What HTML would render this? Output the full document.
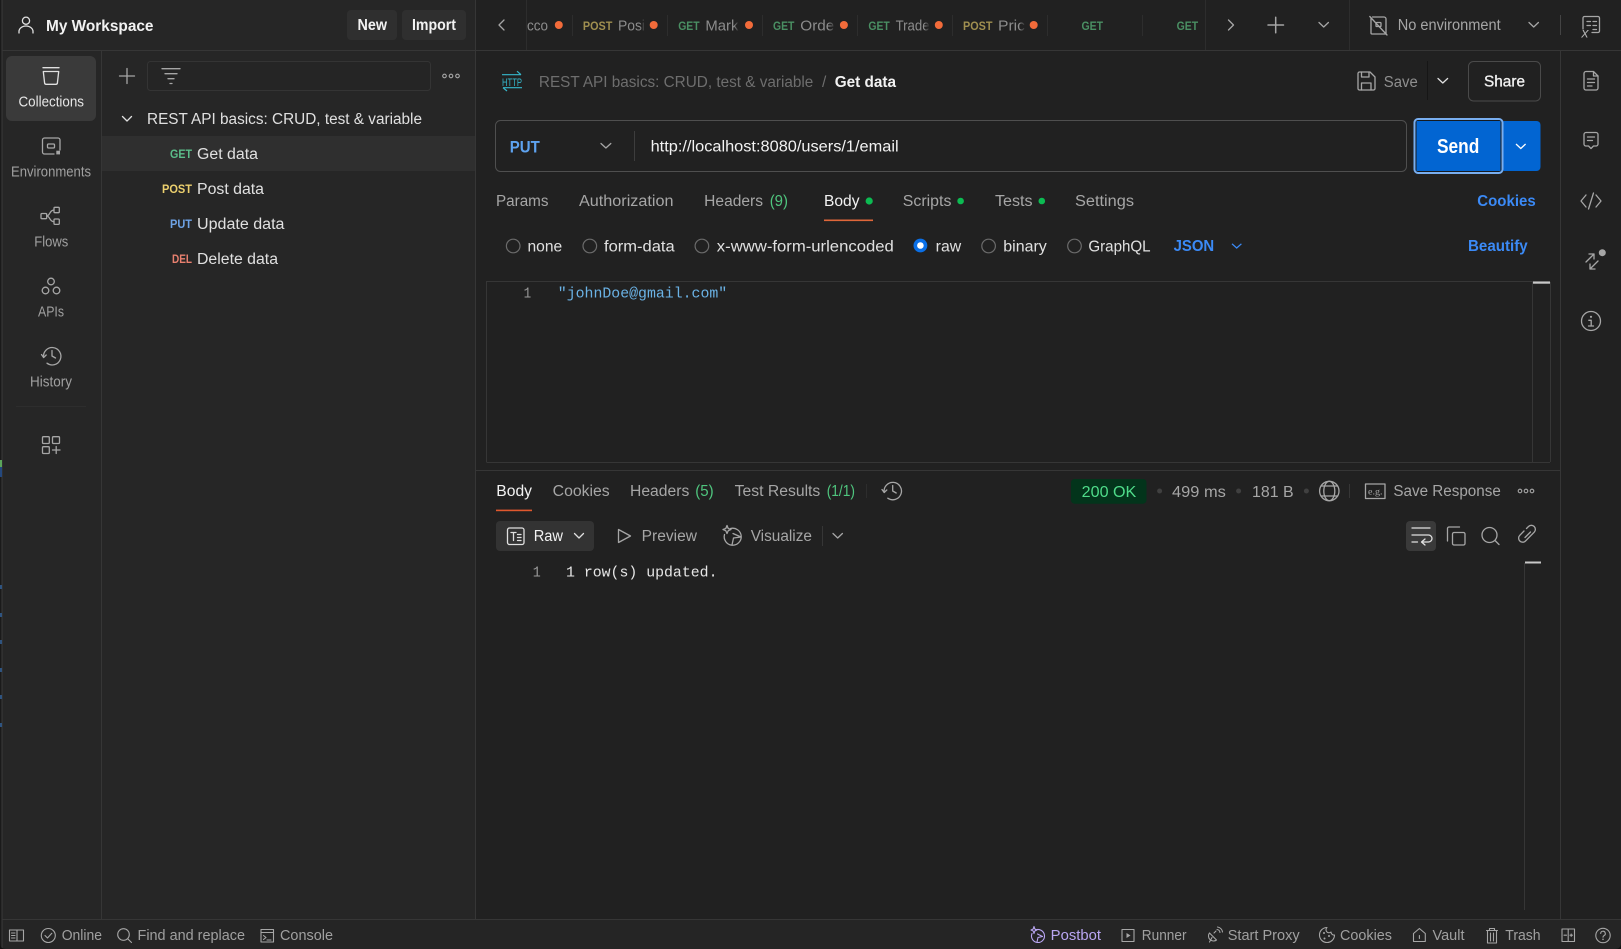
<!DOCTYPE html>
<html><head><meta charset="utf-8"><title>Postman</title>
<style>
html,body{margin:0;padding:0;background:#212121;width:1621px;height:949px;overflow:hidden}
svg{display:block}
text{font-family:"Liberation Sans",sans-serif;font-size:15.5px;fill:#a6a6a6}
.w{fill:#f2f2f2}.l{fill:#e0e0e0}.b{font-weight:bold}
.s{font-size:14.5px;fill:#a0a0a0}
.m{font-size:11.5px;font-weight:bold}
.mono{font-family:"Liberation Mono",monospace;font-size:14.7px}
.ti{font-size:15px;fill:#8c8c8c}
.g{fill:#5bbd8a}.y{fill:#ecd06e}.bl{fill:#6ea3e6}.r{fill:#e8806f}
.tg{fill:#4a8f63}.ty{fill:#a08f50}
.lk{fill:#3b8af6;font-weight:bold}
.i{fill:none;stroke:#a6a6a6;stroke-width:1.3;stroke-linecap:round;stroke-linejoin:round}
.d{fill:none;stroke:#e0e0e0;stroke-width:1.3;stroke-linecap:round;stroke-linejoin:round}
.ln{stroke:#363636;stroke-width:1;fill:none}
.ln2{stroke:#2d2d2d;stroke-width:1;fill:none}
.dot{fill:#f26b3a}
.gd{fill:#0cbb52}
</style></head><body>
<svg width="1621" height="949" viewBox="0 0 1621 949" xmlns="http://www.w3.org/2000/svg">
<defs><linearGradient id="fd"><stop offset="0" stop-color="#212121" stop-opacity="0"/><stop offset="1" stop-color="#212121"/></linearGradient></defs>
<rect width="1621" height="949" fill="#212121"/>
<rect x="0" y="0" width="476" height="949" fill="#262626"/>
<rect x="0" y="919" width="1621" height="30" fill="#252525"/>
<rect x="0" y="0" width="1.5" height="949" fill="#1a1a1a"/>
<rect x="1.5" y="0" width="1" height="949" fill="#3a3a3a"/>
<rect x="0" y="460" width="2" height="7" fill="#5aa55a"/><rect x="0" y="467" width="2" height="10" fill="#24487e"/>
<rect x="0" y="585" width="2" height="4" fill="#2f5480"/><rect x="0" y="613" width="2" height="4" fill="#2f5480"/><rect x="0" y="640" width="2" height="4" fill="#2f5480"/><rect x="0" y="668" width="2" height="4" fill="#2f5480"/><rect x="0" y="695" width="2" height="4" fill="#2f5480"/><rect x="0" y="723" width="2" height="4" fill="#2f5480"/>

<!-- structural lines -->
<path class="ln" d="M2 50.5H1621M101.5 50.5V919M475.5 0V919M1560.5 50V919M2 919.5H1621M476 470.5H1560"/>
<path class="ln2" d="M526.5 0V50M1205.5 0V50M1349.5 0V50"/>
<path class="ln2" d="M572.5 15V36M667.5 15V36M762.5 15V36M857.5 15V36M952.5 15V36M1047.5 15V36M1142.5 15V36"/>
<path class="ln" d="M1560.5 15V35" style="stroke:#444"/>

<!-- workspace header -->
<g class="d"><circle cx="26" cy="20.7" r="3.6"/><path d="M19 33v-1.5a7 5.5 0 0 1 14 0V33"/></g>
<text x="46" y="31" class="w b" textLength="107.5" lengthAdjust="spacingAndGlyphs">My Workspace</text>
<rect x="347" y="10" width="50" height="30" rx="4" fill="#2f2f2f"/>
<rect x="402" y="10" width="64" height="30" rx="4" fill="#2f2f2f"/>
<text x="357.5" y="30" class="w b" textLength="29.5" lengthAdjust="spacingAndGlyphs">New</text>
<text x="412" y="30" class="w b" textLength="44" lengthAdjust="spacingAndGlyphs">Import</text>

<!-- left nav -->
<rect x="6" y="56" width="90" height="65" rx="6" fill="#3a3a3a"/>
<g class="d"><path d="M43 67.7H59"/><path d="M43.3 71.5H58.7L57.4 83a1.5 1.5 0 0 1-1.5 1.3H46.1A1.5 1.5 0 0 1 44.6 83Z"/></g>
<text x="18.5" y="106.5" class="s" style="fill:#e6e6e6" textLength="65.5" lengthAdjust="spacingAndGlyphs">Collections</text>
<g class="i"><path d="M60 150V140a2 2 0 0 0-2-2H44.5a2 2 0 0 0-2 2v12a2 2 0 0 0 2 2H54"/><rect x="47.5" y="144" width="7" height="4" rx="1"/></g>
<rect x="56.3" y="150.7" width="3.7" height="3.7" fill="#a6a6a6"/>
<text x="11" y="176.5" class="s" textLength="80" lengthAdjust="spacingAndGlyphs">Environments</text>
<g class="i"><rect x="41" y="213.5" width="5.7" height="5.2" rx="1"/><rect x="54" y="207.3" width="5.3" height="5.4" rx="1"/><rect x="54" y="219" width="5.3" height="5.4" rx="1"/><path d="M46.7 216C50 216 49.5 210 54 210M46.7 216C50 216 49.5 221.7 54 221.7"/></g>
<text x="34.3" y="246.5" class="s" textLength="34" lengthAdjust="spacingAndGlyphs">Flows</text>
<g class="i"><circle cx="51" cy="281.5" r="3.3"/><circle cx="45.5" cy="290.5" r="3.3"/><circle cx="56.5" cy="290.5" r="3.3"/></g>
<text x="38" y="316.5" class="s" textLength="26" lengthAdjust="spacingAndGlyphs">APIs</text>
<g class="i"><path d="M43.6 357.5A8.7 8.7 0 1 1 47 363.2"/><path d="M41.5 354.5L43.6 357.5L46.2 355"/><path d="M52 350.5V356L55.5 358"/></g>
<text x="30" y="386.5" class="s" textLength="42" lengthAdjust="spacingAndGlyphs">History</text>
<path class="ln2" d="M16 406.5H86"/>
<g class="i"><rect x="42.5" y="436.7" width="6.8" height="6.8" rx="1"/><rect x="52.5" y="436.7" width="7" height="6.8" rx="1"/><rect x="42.5" y="446.7" width="6.8" height="6.8" rx="1"/><path d="M52.5 450H60M56.2 446.5V453.5"/></g>

<!-- collection toolbar -->
<path class="i" d="M119.5 76H134.5M127 68.5V83.5" stroke-width="1.5"/>
<rect x="147.5" y="61.5" width="283" height="29" rx="3" fill="#252525" stroke="#343434"/>
<path class="i" d="M162 68.7H180M165 73.7H177M168 78.7H174M170 83.5H172"/>
<g class="i" style="stroke-width:1.1"><circle cx="444.5" cy="76" r="1.8"/><circle cx="451" cy="76" r="1.8"/><circle cx="457.5" cy="76" r="1.8"/></g>

<path class="d" d="M122.5 116.5L127 121L131.5 116.5"/>
<text x="147" y="124" class="l" textLength="275" lengthAdjust="spacingAndGlyphs">REST API basics: CRUD, test &amp; variable</text>
<rect x="102" y="136" width="373" height="35" fill="#2f2f2f"/>
<text x="170" y="158" class="m g" textLength="22" lengthAdjust="spacingAndGlyphs">GET</text>
<text x="197" y="159" class="l" textLength="61" lengthAdjust="spacingAndGlyphs">Get data</text>
<text x="162" y="193" class="m y" textLength="30" lengthAdjust="spacingAndGlyphs">POST</text>
<text x="197" y="194" class="l" textLength="67" lengthAdjust="spacingAndGlyphs">Post data</text>
<text x="170" y="228" class="m bl" textLength="22" lengthAdjust="spacingAndGlyphs">PUT</text>
<text x="197" y="229" class="l" textLength="87.5" lengthAdjust="spacingAndGlyphs">Update data</text>
<text x="172" y="263" class="m r" textLength="20" lengthAdjust="spacingAndGlyphs">DEL</text>
<text x="197" y="264" class="l" textLength="81" lengthAdjust="spacingAndGlyphs">Delete data</text>

<!-- tabs -->
<path class="i" d="M504 20L499 25L504 30"/>
<text x="527" y="30.5" class="ti" textLength="21" lengthAdjust="spacingAndGlyphs">cco</text><circle class="dot" cx="558.8" cy="25" r="4"/>
<text x="582.9" y="30" class="m ty" textLength="29.5" lengthAdjust="spacingAndGlyphs">POST</text><text x="618" y="30.5" class="ti" textLength="27" lengthAdjust="spacingAndGlyphs">Posi</text><circle class="dot" cx="653.7" cy="25" r="4"/>
<text x="678.2" y="30" class="m tg" textLength="21.4" lengthAdjust="spacingAndGlyphs">GET</text><text x="705.4" y="30.5" class="ti" textLength="33" lengthAdjust="spacingAndGlyphs">Mark</text><circle class="dot" cx="749" cy="25" r="4"/>
<text x="773" y="30" class="m tg" textLength="21.4" lengthAdjust="spacingAndGlyphs">GET</text><text x="800.3" y="30.5" class="ti" textLength="34" lengthAdjust="spacingAndGlyphs">Orde</text><circle class="dot" cx="843.9" cy="25" r="4"/>
<text x="868.4" y="30" class="m tg" textLength="21.4" lengthAdjust="spacingAndGlyphs">GET</text><text x="895.6" y="30.5" class="ti" textLength="34" lengthAdjust="spacingAndGlyphs">Trade</text><circle class="dot" cx="938.8" cy="25" r="4"/>
<text x="963" y="30" class="m ty" textLength="29.5" lengthAdjust="spacingAndGlyphs">POST</text><text x="998" y="30.5" class="ti" textLength="27" lengthAdjust="spacingAndGlyphs">Pric</text><circle class="dot" cx="1033.7" cy="25" r="4"/>
<g fill="url(#fd)"><rect x="640" y="15" width="5" height="20"/><rect x="734" y="15" width="5" height="20"/><rect x="829.5" y="15" width="5" height="20"/><rect x="924.5" y="15" width="5" height="20"/><rect x="1020" y="15" width="5" height="20"/></g>
<text x="1081.5" y="30" class="m tg" textLength="21.5" lengthAdjust="spacingAndGlyphs">GET</text>
<text x="1176.6" y="30" class="m tg" textLength="21.5" lengthAdjust="spacingAndGlyphs">GET</text>
<path class="i" d="M1228.5 20L1233.5 25L1228.5 30"/>
<path class="i" d="M1268 25H1283.5M1275.7 17.2V32.8" style="stroke-width:1.5"/>
<path class="i" d="M1319 22.5L1323.7 27L1328.4 22.5"/>
<g class="i"><path d="M1371 18.5V33a1 1 0 0 0 1 1H1386V19a2 2 0 0 0-2-2H1372.5"/><path d="M1369.8 16.5L1387 35" /><rect x="1376" y="22.5" width="5" height="4" rx=".8"/></g>
<text x="1397.7" y="30" fill="#a0a0a0" textLength="103" lengthAdjust="spacingAndGlyphs">No environment</text>
<path class="i" d="M1529 22.5L1533.7 27L1538.4 22.5"/>
<g class="i"><path d="M1583 29V18a1.5 1.5 0 0 1 1.5-1.5H1598a1.5 1.5 0 0 1 1.5 1.5V31a1.5 1.5 0 0 1-1.5 1.5H1592"/><path d="M1587 21.5H1590.5M1593 21.5H1596.5M1587 25.5H1590.5M1593 25.5H1596.5M1593 29.5H1596.5"/></g>
<text x="1581.5" y="37.5" style="font-size:14px;font-style:italic;fill:#b0b0b0">x</text>

<!-- breadcrumb -->
<g fill="none" stroke="#35b8cc" stroke-width="1.2"><path d="M502 74.7H521M517 71.2L521 74.7M503 87.7H522M503 87.7L507 91"/></g>
<text x="502" y="85.8" style="font-size:11px;fill:#35b8cc" textLength="20" lengthAdjust="spacingAndGlyphs">HTTP</text>
<text x="538.9" y="87" style="fill:#6e6e6e" textLength="274.4" lengthAdjust="spacingAndGlyphs">REST API basics: CRUD, test &amp; variable</text>
<text x="822" y="87" style="fill:#6e6e6e">/</text>
<text x="834.7" y="87" class="w b" textLength="61.3" lengthAdjust="spacingAndGlyphs">Get data</text>
<g class="i"><path d="M1358 73.5a1.5 1.5 0 0 1 1.5-1.5H1370L1375 77V88.5a1.5 1.5 0 0 1-1.5 1.5H1359.5a1.5 1.5 0 0 1-1.5-1.5Z"/><path d="M1361.5 72V77H1369V72M1361.5 90V83H1371V90"/></g>
<text x="1383.8" y="87" style="fill:#8f8f8f" textLength="34" lengthAdjust="spacingAndGlyphs">Save</text>
<path d="M1427.5 61V100" stroke="#161616"/>
<path class="d" d="M1438 78.5L1442.8 83L1447.6 78.5"/>
<rect x="1468.5" y="61.5" width="72" height="39.5" rx="5" fill="none" stroke="#4a4a4a"/>
<text x="1484" y="86.5" class="w" style="font-size:15.5px;stroke:#f2f2f2;stroke-width:.3" textLength="41" lengthAdjust="spacingAndGlyphs">Share</text>
<g class="i"><path d="M1584 73.5a2 2 0 0 1 2-2H1593.5L1598 76V88a2 2 0 0 1-2 2H1586a2 2 0 0 1-2-2Z"/><path d="M1587.5 79H1594.5M1587.5 82.5H1594.5M1587.5 86H1592M1593.5 72V76H1598"/></g>

<!-- URL bar -->
<rect x="495.5" y="120.5" width="911" height="51" rx="5" fill="#212121" stroke="#4f4f4f"/>
<text x="509.8" y="152.5" style="font-size:17px;fill:#5ea3f0;font-weight:bold" textLength="30" lengthAdjust="spacingAndGlyphs">PUT</text>
<path class="i" d="M601 143.5L605.9 148L610.8 143.5"/>
<path class="ln" d="M634.5 131V161" style="stroke:#3d3d3d"/>
<text x="650.6" y="151.5" class="w" textLength="248" lengthAdjust="spacingAndGlyphs">http://localhost:8080/users/1/email</text>
<path d="M1503.5 121H1536.5a4 4 0 0 1 4 4V167a4 4 0 0 1-4 4H1503.5Z" fill="#0265d2"/>
<rect x="1414.5" y="119" width="88" height="54" rx="3.5" fill="#161a1f" stroke="#78aef0" stroke-width="2"/>
<rect x="1416.5" y="121" width="84" height="50" fill="#0265d2"/>
<text x="1437" y="153" style="font-size:20px;font-weight:bold;fill:#fff" textLength="42.3" lengthAdjust="spacingAndGlyphs">Send</text>
<path d="M1516 144L1520.8 148.5L1525.6 144" fill="none" stroke="#fff" stroke-width="1.3"/>

<!-- right sidebar icons -->
<g class="i" transform="translate(0,-1)"><path d="M1584 135.5a2 2 0 0 1 2-2H1596a2 2 0 0 1 2 2V145a2 2 0 0 1-2 2H1593.5L1591 149.5L1588.5 147H1586a2 2 0 0 1-2-2Z"/><path d="M1587.5 138H1594.5M1587.5 141.5H1592.5"/></g>
<path class="i" d="M1586 195L1581 201L1586 207M1596 195L1601 201L1596 207M1593.5 193L1588.5 209"/>
<g class="i"><path d="M1586 262L1594 254M1589 254H1594V259M1598 261L1590 269M1590 264V269H1595"/></g>
<circle cx="1602.3" cy="252.7" r="3.5" fill="#a6a6a6"/>
<circle class="i" cx="1591" cy="321" r="9.5"/>
<circle cx="1591" cy="316.8" r="1.1" fill="#a6a6a6"/>
<path class="i" d="M1588.8 320.3H1591.2V326M1588.5 326H1593.5"/>

<!-- request tabs -->
<text x="496" y="206" textLength="52.5" lengthAdjust="spacingAndGlyphs">Params</text>
<text x="579" y="206" textLength="94.5" lengthAdjust="spacingAndGlyphs">Authorization</text>
<text x="704.2" y="206" textLength="58.8" lengthAdjust="spacingAndGlyphs">Headers</text>
<text x="769.7" y="206" style="fill:#4fc57e" textLength="18.3" lengthAdjust="spacingAndGlyphs">(9)</text>
<text x="824" y="206" class="w" textLength="35.5" lengthAdjust="spacingAndGlyphs">Body</text>
<circle class="gd" cx="869.2" cy="201" r="3.6"/>
<rect x="824" y="219.5" width="49" height="1.6" fill="#e0673a"/>
<text x="902.8" y="206" textLength="48.6" lengthAdjust="spacingAndGlyphs">Scripts</text>
<circle class="gd" cx="960.6" cy="201" r="3.3"/>
<text x="995" y="206" textLength="37.6" lengthAdjust="spacingAndGlyphs">Tests</text>
<circle class="gd" cx="1041.8" cy="201" r="3.3"/>
<text x="1075" y="206" textLength="59" lengthAdjust="spacingAndGlyphs">Settings</text>
<text x="1477.3" y="206" class="lk" textLength="58.4" lengthAdjust="spacingAndGlyphs">Cookies</text>

<!-- body type radios -->
<g fill="none" stroke="#6b6b6b" stroke-width="1.2"><circle cx="513.2" cy="246" r="6.8"/><circle cx="589.8" cy="246" r="6.8"/><circle cx="701.9" cy="246" r="6.8"/><circle cx="988.6" cy="246" r="6.8"/><circle cx="1074.5" cy="246" r="6.8"/></g>
<circle cx="920.4" cy="245.5" r="6.9" fill="#0a6fe6"/><circle cx="920.4" cy="245.5" r="3.3" fill="#fff"/>
<text x="527.5" y="251.7" class="l" textLength="34.7" lengthAdjust="spacingAndGlyphs">none</text>
<text x="604" y="251.7" class="l" textLength="70.7" lengthAdjust="spacingAndGlyphs">form-data</text>
<text x="716.8" y="251.7" class="l" textLength="177" lengthAdjust="spacingAndGlyphs">x-www-form-urlencoded</text>
<text x="935.7" y="251.7" class="l" textLength="25.5" lengthAdjust="spacingAndGlyphs">raw</text>
<text x="1003.3" y="251.7" class="l" textLength="43.5" lengthAdjust="spacingAndGlyphs">binary</text>
<text x="1088.4" y="251.7" class="l" textLength="62.2" lengthAdjust="spacingAndGlyphs">GraphQL</text>
<text x="1173.6" y="251" class="lk" textLength="40.6" lengthAdjust="spacingAndGlyphs">JSON</text>
<path d="M1232 243.8L1236.7 248L1241.4 243.8" fill="none" stroke="#3b8af6" stroke-width="1.3"/>
<text x="1468" y="251" class="lk" textLength="59.7" lengthAdjust="spacingAndGlyphs">Beautify</text>

<!-- editor -->
<path class="ln" d="M486.5 462V281.5H1550M486.5 462.5H1550M1532.5 282V462M1550.5 282V462"/>
<rect x="1533" y="281.5" width="17" height="2.2" fill="#c8c8c8"/>
<text x="523.6" y="297.5" class="mono" style="fill:#9a9a9a" textLength="7.6" lengthAdjust="spacingAndGlyphs">1</text>
<text x="557.8" y="297.5" class="mono" style="fill:#6bb3e6" textLength="169.4" lengthAdjust="spacingAndGlyphs">"johnDoe@gmail.com"</text>

<!-- response tabs -->
<text x="496.3" y="496" class="w" textLength="35.7" lengthAdjust="spacingAndGlyphs">Body</text>
<rect x="496" y="509.6" width="36" height="1.6" fill="#e0582e"/>
<text x="552.7" y="496" textLength="57" lengthAdjust="spacingAndGlyphs">Cookies</text>
<text x="630" y="496" textLength="59.3" lengthAdjust="spacingAndGlyphs">Headers</text>
<text x="695.3" y="496" style="fill:#4fc57e" textLength="18.4" lengthAdjust="spacingAndGlyphs">(5)</text>
<text x="734.7" y="496" textLength="85.6" lengthAdjust="spacingAndGlyphs">Test Results</text>
<text x="826.7" y="496" style="fill:#4fc57e" textLength="28.3" lengthAdjust="spacingAndGlyphs">(1/1)</text>
<path class="ln2" d="M866.5 484V498"/>
<g class="i"><path d="M884.2 492.5A8.7 8.7 0 1 1 887.8 498.2"/><path d="M882 489.5L884.2 492.5L886.8 490"/><path d="M892.7 485.5V491L896.2 493"/></g>

<!-- status -->
<rect x="1071" y="479" width="75.5" height="24.7" rx="3.5" fill="#03341b"/>
<text x="1081.7" y="497" style="fill:#4fdc8a" textLength="54.6" lengthAdjust="spacingAndGlyphs">200 OK</text>
<circle cx="1159.6" cy="491" r="2.5" fill="#404040"/>
<text x="1172" y="497" textLength="53.9" lengthAdjust="spacingAndGlyphs">499 ms</text>
<circle cx="1238.6" cy="491" r="2.5" fill="#404040"/>
<text x="1252" y="497" textLength="41.6" lengthAdjust="spacingAndGlyphs">181 B</text>
<circle cx="1306.4" cy="491" r="2.5" fill="#404040"/>
<g class="i"><circle cx="1329.3" cy="491" r="9.7"/><ellipse cx="1329.3" cy="491" rx="5.5" ry="9.7"/><path d="M1321 486H1337.6M1321 496H1337.6"/></g>
<path class="ln" d="M1349.5 484V498"/>
<rect x="1365.5" y="484" width="19.5" height="14.5" class="i"/>
<text x="1368" y="494.5" style="font-family:'Liberation Serif',serif;font-size:9.5px;fill:#a6a6a6" textLength="14.5" lengthAdjust="spacingAndGlyphs">e.g.</text>
<text x="1393.4" y="496" textLength="107.4" lengthAdjust="spacingAndGlyphs">Save Response</text>
<g class="i" style="stroke-width:1.1"><circle cx="1520" cy="491" r="1.8"/><circle cx="1526" cy="491" r="1.8"/><circle cx="1532" cy="491" r="1.8"/></g>

<!-- response toolbar -->
<rect x="496" y="521" width="98" height="30" rx="4" fill="#333"/>
<g class="d"><rect x="507.5" y="528" width="16.5" height="16.5" rx="2"/><path d="M511 532.5H516M513.5 532.5V540.5M517.5 534.5H521M517.5 537.5H521M517.5 540.5H521"/></g>
<text x="533.7" y="541" class="w" textLength="29.3" lengthAdjust="spacingAndGlyphs">Raw</text>
<path class="d" d="M574.5 533.5L579 538L583.5 533.5"/>
<path class="i" d="M618.5 529.5L630.5 536L618.5 542.5Z"/>
<text x="641.7" y="541" textLength="55.3" lengthAdjust="spacingAndGlyphs">Preview</text>
<g class="i"><path d="M730.5 528.5a8.5 8.5 0 1 1-6 6"/><path d="M733 533.5L741 537L733.5 538L732 545"/><path d="M727 525.5L728.2 528.5L731 529.5L728.2 530.7L727 533.5L725.8 530.7L723 529.5L725.8 528.5Z"/></g>
<text x="750.7" y="541" textLength="61.3" lengthAdjust="spacingAndGlyphs">Visualize</text>
<path class="ln" d="M822.5 526V546"/>
<path class="i" d="M833 533.5L837.7 538L842.4 533.5"/>
<rect x="1406" y="521" width="30" height="30" rx="4" fill="#3a3a3a"/>
<g class="d"><path d="M1412 528H1430M1412 535H1428.5a3 3 0 0 1 0 7H1422M1425 539L1421.5 542L1425 545M1412 542H1417.5"/></g>
<g class="i"><rect x="1452.5" y="532.5" width="12.5" height="12.5" rx="1.5"/><path d="M1447.5 541V528.5a1.5 1.5 0 0 1 1.5-1.5H1459.5"/></g>
<g class="i"><circle cx="1489.5" cy="535" r="7.5"/><path d="M1495 540.5L1499 544.5"/></g>
<g class="i"><path d="M1526.5 528.5L1528.5 526.5a4 4 0 0 1 5.7 5.7L1525.5 541a4 4 0 0 1-5.7-5.7L1524 531"/><path d="M1525 537.5L1530.5 532"/></g>

<!-- response body -->
<text x="532.7" y="576.5" class="mono" style="fill:#9a9a9a" textLength="8" lengthAdjust="spacingAndGlyphs">1</text>
<text x="566" y="576.5" class="mono" style="fill:#e6e6e6" textLength="151.5" lengthAdjust="spacingAndGlyphs">1 row(s) updated.</text>
<rect x="1525" y="561.5" width="16" height="2" fill="#c8c8c8"/>
<path class="ln" d="M1524.5 563V910"/>

<!-- status bar -->
<g class="i" style="stroke-width:1.1">
<rect x="9.5" y="930" width="14" height="11"/><path d="M17 930V941M11.5 933H15M11.5 935.5H15M11.5 938H15"/>
<circle cx="48.3" cy="935.5" r="7"/><path d="M45 935.5L47.5 938L51.8 933.3"/>
<circle cx="123.5" cy="934.5" r="5.8"/><path d="M128 939L131.5 942.5"/>
<rect x="261" y="929.5" width="12.5" height="12.5"/><path d="M261 932.5H273.5M263.5 935.5L266 937.5L263.5 939.5M267 940H271"/>
</g>
<text x="61.7" y="940" class="s" textLength="40.3" lengthAdjust="spacingAndGlyphs">Online</text>
<text x="137.5" y="940" class="s" textLength="107.5" lengthAdjust="spacingAndGlyphs">Find and replace</text>
<text x="280" y="940" class="s" textLength="53" lengthAdjust="spacingAndGlyphs">Console</text>

<g class="i" style="stroke:#b9a6f2;stroke-width:1.1"><path d="M1035.5 930a6.5 6.5 0 1 1-3.5 3.5"/><path d="M1037.5 934L1042.5 936.5L1038 937.5L1037 942"/><path d="M1034 926.5L1034.8 929L1037 930L1034.8 931L1034 933.5L1033.2 931L1031 930L1033.2 929Z"/></g>
<text x="1050.7" y="940" class="s" style="fill:#b9a6f2" textLength="50.3" lengthAdjust="spacingAndGlyphs">Postbot</text>
<g class="i" style="stroke-width:1.1"><rect x="1122" y="929.5" width="12" height="12"/></g><path d="M1126.5 933L1130.5 935.5L1126.5 938Z" fill="#a6a6a6"/>
<text x="1141.8" y="940" class="s" textLength="44.7" lengthAdjust="spacingAndGlyphs">Runner</text>
<g class="i" style="stroke-width:1.1"><path d="M1209.5 933L1216.5 940a5 5 0 0 1-7-7Z"/><path d="M1212 937.5L1209.5 942M1214 933L1216 931M1217 929.5a3.5 3.5 0 0 1 3 3M1217.5 927a6 6 0 0 1 5 5"/></g>
<text x="1227.7" y="940" class="s" textLength="72" lengthAdjust="spacingAndGlyphs">Start Proxy</text>
<g class="i" style="stroke-width:1.1"><path d="M1327 927.5a7.5 7.5 0 1 0 7.5 7.5a3 3 0 0 1-3.5-3a3 3 0 0 1-4-4.5Z"/></g>
<g fill="#a6a6a6"><circle cx="1324" cy="933" r="1"/><circle cx="1329" cy="936" r="1"/><circle cx="1324.5" cy="938.5" r="1"/></g>
<text x="1340" y="940" class="s" textLength="52" lengthAdjust="spacingAndGlyphs">Cookies</text>
<g class="i" style="stroke-width:1.1"><path d="M1413.5 933.5L1419.4 928.5L1425.3 933.5V941.5H1413.5Z"/><path d="M1419.4 935.5V938.5"/></g>
<text x="1432.5" y="940" class="s" textLength="32" lengthAdjust="spacingAndGlyphs">Vault</text>
<g class="i" style="stroke-width:1.1"><path d="M1486.5 930.5H1497.5M1489.5 930.5V928.5H1494.5V930.5M1487.5 930.5V943H1496.5V930.5M1490.5 933V941M1493.5 933V941"/></g>
<text x="1505.3" y="940" class="s" textLength="35.3" lengthAdjust="spacingAndGlyphs">Trash</text>
<g class="i" style="stroke-width:1.1"><rect x="1562" y="929" width="12.5" height="12.5"/><path d="M1568.2 929V941.5M1564 935.2H1566.5M1570 935.2H1572.5M1571.2 934V936.4"/></g>
<g class="i" style="stroke-width:1.1"><circle cx="1603" cy="935.5" r="7.2"/><path d="M1600.7 933.5a2.3 2.3 0 1 1 3.3 2.1c-.7.4-1 .8-1 1.6"/></g>
<circle cx="1603" cy="939.3" r=".8" fill="#a6a6a6"/>

<!-- window corners -->
<path d="M0 949V943Q0 949 6 949Z" fill="#111"/>
<path d="M1621 949V943Q1621 949 1615 949Z" fill="#111"/>
</svg>
</body></html>
